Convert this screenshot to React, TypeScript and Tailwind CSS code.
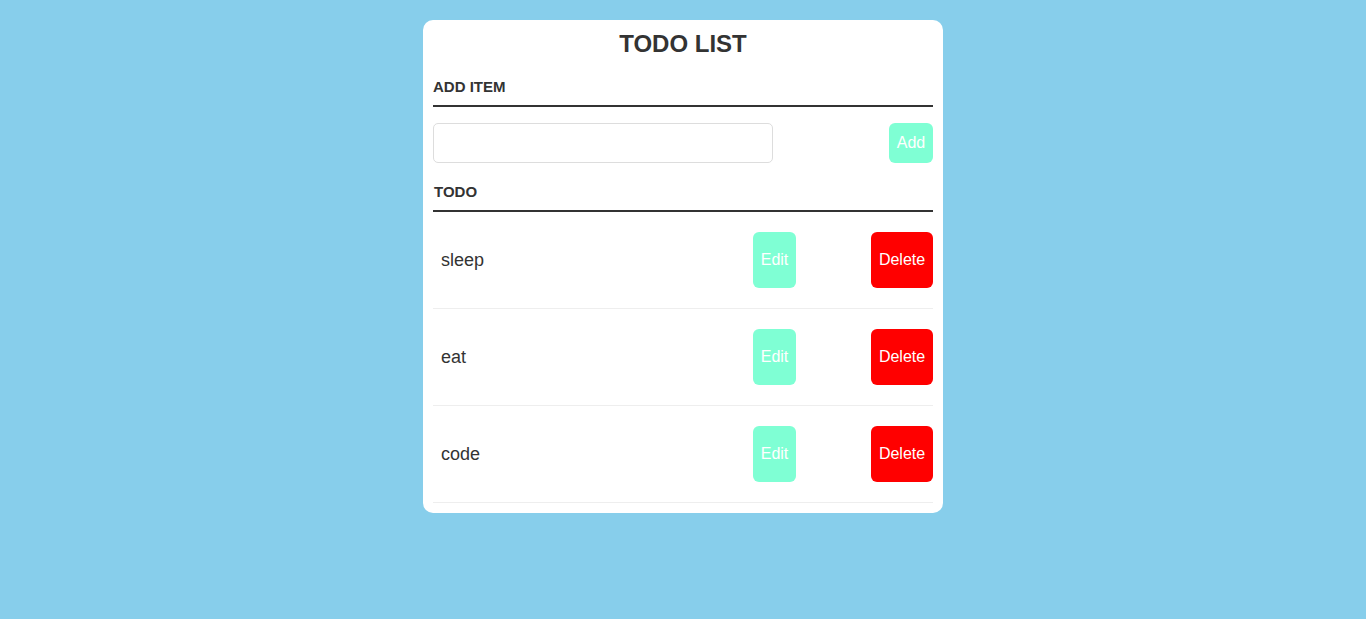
import { useState } from "react";

const initialTodos = ["sleep", "eat", "code"];

const App = () => {
  const [todos] = useState(initialTodos);
  const [text, setText] = useState("");

  return (
    <div className="min-h-screen w-full bg-[#87ceeb] pt-[20px] font-['Liberation_Sans',Arial,sans-serif] text-[#333]">
      <div className="mx-auto w-[520px] rounded-[10px] bg-white px-[10px] pt-[11px] pb-[10px]">
        <h1 className="text-center text-[24px] font-bold leading-[26px]">TODO LIST</h1>

        <h3 className="mt-[21px] border-b-2 border-[#333] pb-[10px] text-[15px] font-bold leading-[17px]">
          ADD ITEM
        </h3>
        <div className="mt-[16px] flex items-center justify-between">
          <input
            value={text}
            onChange={(e) => setText(e.target.value)}
            className="h-[40px] w-[340px] rounded-[5px] border border-[#ddd] px-2 outline-none"
          />
          <button className="h-[40px] w-[44px] rounded-[6px] bg-[#7fffd4] text-[16px] text-white">
            Add
          </button>
        </div>

        <h3 className="mt-[20px] border-b-2 border-[#333] pb-[10px] pl-px text-[15px] font-bold leading-[17px]">
          TODO
        </h3>
        <ul>
          {todos.map((todo) => (
            <li key={todo} className="flex items-center border-b border-[#eee] py-[20px]">
              <span className="flex-1 pl-2 text-[18px]">{todo}</span>
              <button className="h-[56px] w-[43px] rounded-[6px] bg-[#7fffd4] text-[16px] text-white">
                Edit
              </button>
              <div className="w-[75px]" />
              <button className="h-[56px] w-[62px] rounded-[6px] bg-[#ff0000] text-[16px] text-white">
                Delete
              </button>
            </li>
          ))}
        </ul>
      </div>
    </div>
  );
};

export default App;
